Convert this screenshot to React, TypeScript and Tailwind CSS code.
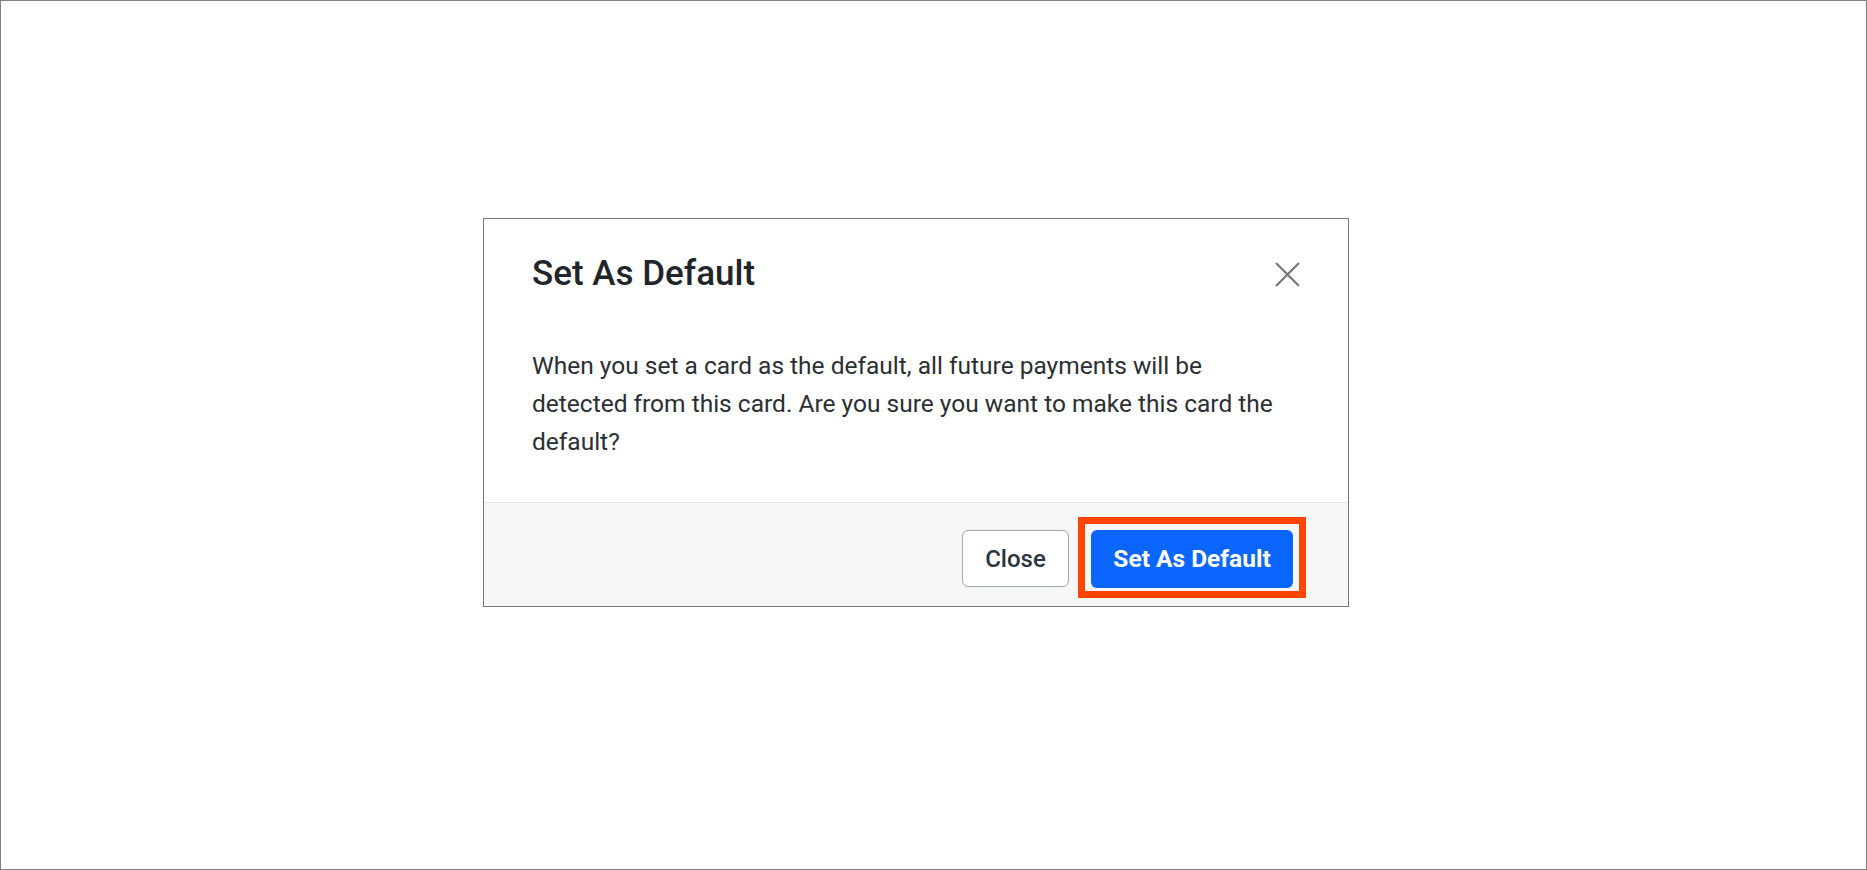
export default function App() {
    return (
        <div
            className="h-screen w-full border border-[#808080] bg-white flex flex-col items-center pt-[217px] pr-[35px]"
            style={{ fontFamily: "Roboto, 'Liberation Sans', sans-serif" }}
        >
            <div className="w-[866px] border border-[#7a7a7a] bg-white">
                <div className="flex items-center justify-between px-12 pt-[34px]">
                    <h2 className="text-[35px] leading-[42px] font-medium text-[#212529]">
                        Set As Default
                    </h2>
                    <button className="w-[25px] h-[25px] text-[#777777]">
                        <svg viewBox="0 0 25 25" width="25" height="25">
                            <path
                                d="M1 1 L24 24 M24 1 L1 24"
                                stroke="currentColor"
                                strokeWidth="2.2"
                                fill="none"
                            />
                        </svg>
                    </button>
                </div>

                <p className="px-12 pt-[52px] pb-[41px] text-[24.5px] leading-[38px] text-[#2b2f33]">
                    When you set a card as the default, all future payments will be
                    detected from this card. Are you sure you want to make this card the
                    default?
                </p>

                <div className="flex items-start justify-end gap-[22px] border-t border-[#dee2e6] bg-[#f6f8f8] pt-[27px] pb-[18px] pr-[55px]">
                    <button className="w-[107px] h-[57px] rounded-md border border-[#9ea8b3] bg-white text-[24px] font-medium text-[#2c3440]">
                        Close
                    </button>
                    <div className="relative">
                        <button className="w-[202px] h-[58px] rounded-md bg-[#0b66ff] text-[24.5px] font-bold text-white">
                            Set As Default
                        </button>
                        {/* highlight drawn over the primary action */}
                        <div className="absolute -top-[13px] -left-[13px] -right-[13px] -bottom-[10px] border-[7px] border-[#ff4500] pointer-events-none" />
                    </div>
                </div>
            </div>
        </div>
    );
}
